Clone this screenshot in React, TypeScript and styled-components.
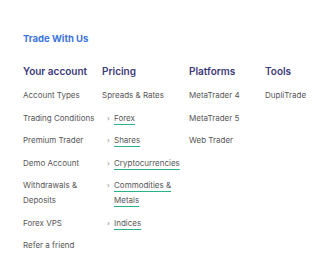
import styled, { createGlobalStyle } from 'styled-components';

const GlobalStyle = createGlobalStyle`
  html, body {
    margin: 0;
    padding: 0;
    background: #ffffff;
  }
  body {
    font-family: Inter, "Noto Sans", sans-serif;
  }
`;

type Link = { label: string; sub?: boolean };
type Column = { title: string; links: Link[] };

const columns: Column[] = [
  {
    title: 'Your account',
    links: [
      { label: 'Account Types' },
      { label: 'Trading Conditions' },
      { label: 'Premium Trader' },
      { label: 'Demo Account' },
      { label: 'Withdrawals & Deposits' },
      { label: 'Forex VPS' },
      { label: 'Refer a friend' },
    ],
  },
  {
    title: 'Pricing',
    links: [
      { label: 'Spreads & Rates' },
      { label: 'Forex', sub: true },
      { label: 'Shares', sub: true },
      { label: 'Cryptocurrencies', sub: true },
      { label: 'Commodities & Metals', sub: true },
      { label: 'Indices', sub: true },
    ],
  },
  {
    title: 'Platforms',
    links: [{ label: 'MetaTrader 4' }, { label: 'MetaTrader 5' }, { label: 'Web Trader' }],
  },
  {
    title: 'Tools',
    links: [{ label: 'DupliTrade' }],
  },
];

function App() {
  return (
    <>
      <GlobalStyle />
      <Footer>
        <Title>Trade With Us</Title>
        <Columns>
          {columns.map((col) => (
            <Col key={col.title}>
              <Heading>{col.title}</Heading>
              <List>
                {col.links.map((link) => (
                  <Item key={link.label} $sub={link.sub}>
                    {link.sub && <Chevron>›</Chevron>}
                    <LinkText $sub={link.sub}>{link.label}</LinkText>
                  </Item>
                ))}
              </List>
            </Col>
          ))}
        </Columns>
      </Footer>
    </>
  );
}

export default App;

const Footer = styled.footer`
  width: 336px;
  height: 273px;
  box-sizing: border-box;
  padding: 32px 0 0 23px;
  overflow: hidden;
`;

const Title = styled.h2`
  margin: 0;
  font-size: 9.5px;
  line-height: 14px;
  font-weight: 700;
  color: #3b74e0;
`;

const Columns = styled.div`
  display: grid;
  grid-template-columns: 79px 87px 76px 1fr;
  margin-top: 18px;
`;

const Col = styled.div`
  display: flex;
  flex-direction: column;
`;

const Heading = styled.h3`
  margin: 0;
  font-size: 10px;
  line-height: 14px;
  font-weight: 600;
  color: #3d3a7a;
`;

const List = styled.ul`
  list-style: none;
  margin: 10px 0 0;
  padding: 0;
  display: flex;
  flex-direction: column;
  gap: 7.5px;
`;

const Item = styled.li<{ $sub?: boolean }>`
  display: flex;
  align-items: flex-start;
  padding-left: ${(p) => (p.$sub ? '5px' : '0')};
  font-size: 8px;
  line-height: 15px;
  color: #575757;
`;

const Chevron = styled.span`
  width: 7px;
  flex: none;
  font-size: 7px;
  color: #8a8a8a;
`;

const LinkText = styled.span<{ $sub?: boolean }>`
  text-decoration: ${(p) => (p.$sub ? 'underline' : 'none')};
  text-decoration-color: #27b28a;
  text-decoration-thickness: 1px;
  text-underline-offset: 3px;
`;
